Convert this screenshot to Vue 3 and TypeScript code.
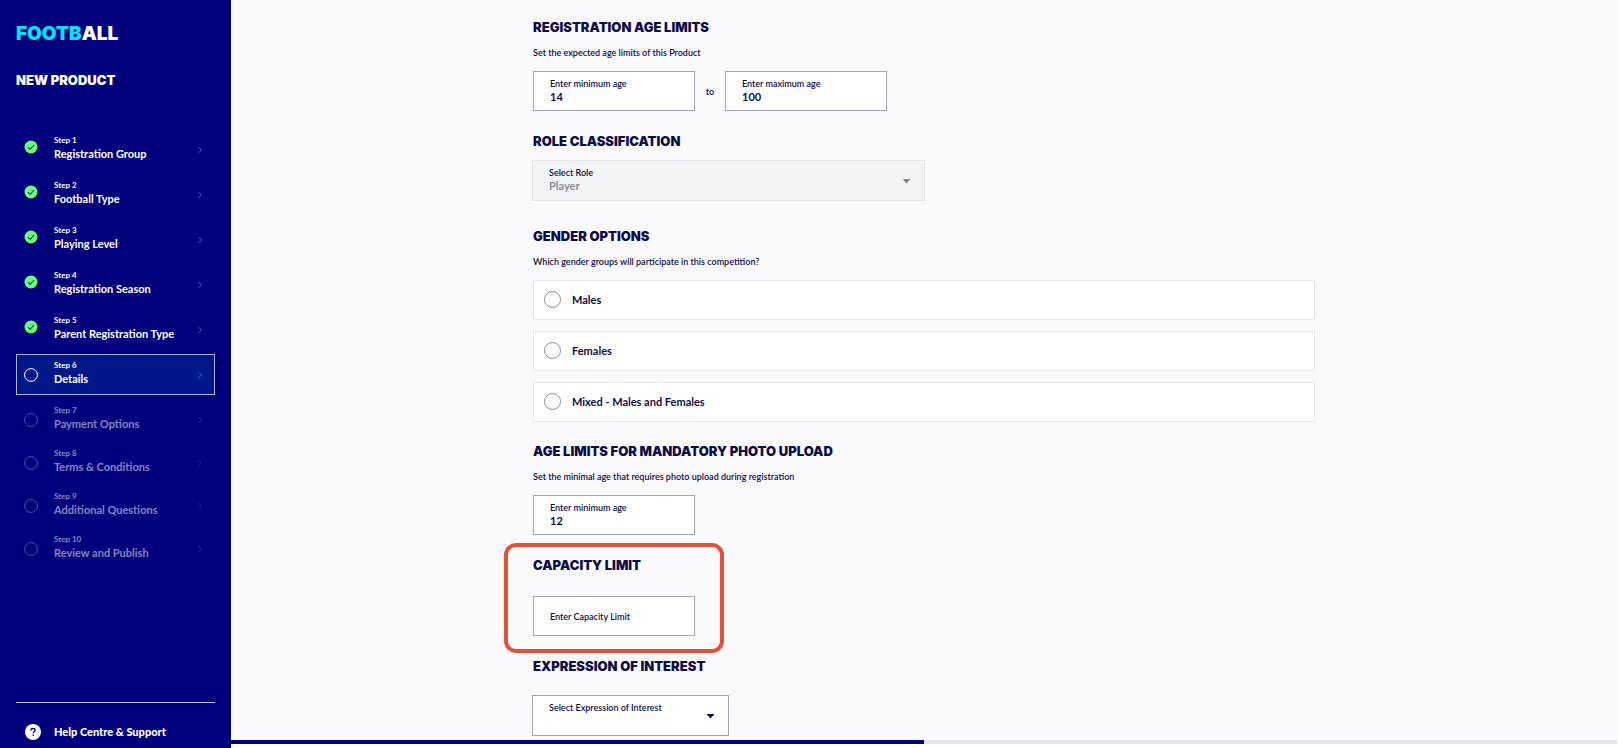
<script setup lang="ts">
import { ref } from 'vue'

type StepState = 'done' | 'current' | 'locked'

interface Step {
  id: number
  title: string
  state: StepState
}

const steps: Step[] = [
  { id: 1, title: 'Registration Group', state: 'done' },
  { id: 2, title: 'Football Type', state: 'done' },
  { id: 3, title: 'Playing Level', state: 'done' },
  { id: 4, title: 'Registration Season', state: 'done' },
  { id: 5, title: 'Parent Registration Type', state: 'done' },
  { id: 6, title: 'Details', state: 'current' },
  { id: 7, title: 'Payment Options', state: 'locked' },
  { id: 8, title: 'Terms & Conditions', state: 'locked' },
  { id: 9, title: 'Additional Questions', state: 'locked' },
  { id: 10, title: 'Review and Publish', state: 'locked' },
]

const genders: string[] = ['Males', 'Females', 'Mixed - Males and Females']

const minAge = ref('14')
const maxAge = ref('100')
const photoAge = ref('12')
const capacity = ref('')
const role = ref('Player')
const interest = ref('')
const gender = ref('')
const progress = ref(50)
</script>

<template>
  <div class="shell">
    <aside class="sidebar">
      <div class="logo"><span class="logo-accent">FOOTB</span>ALL</div>
      <h1 class="product">NEW PRODUCT</h1>

      <nav class="steps" aria-label="Steps">
        <button
          v-for="step in steps"
          :key="step.id"
          type="button"
          class="step"
          :class="step.state"
          :disabled="step.state === 'locked'"
        >
          <svg v-if="step.state === 'done'" class="mark" viewBox="0 0 14 14" aria-hidden="true">
            <circle cx="7" cy="7" r="6.5" fill="#6dff70" />
            <path d="M4 7.3 6.2 9.3 10.1 5" fill="none" stroke="#00337a" stroke-width="1.1" />
          </svg>
          <svg v-else class="mark" viewBox="0 0 14 14" aria-hidden="true">
            <circle cx="7" cy="7" r="6.4" fill="none" stroke="#ffffff" stroke-width="1" />
          </svg>
          <span class="step-text">
            <span class="step-label">Step {{ step.id }}</span>
            <span class="step-title">{{ step.title }}</span>
          </span>
          <svg class="chevron" viewBox="0 0 4 8" aria-hidden="true">
            <path d="M0.8 1.2 3.2 4 0.8 6.8" fill="none" stroke="#1277e0" stroke-width="1" />
          </svg>
        </button>
      </nav>

      <a class="help" href="#">
        <svg class="help-icon" viewBox="0 0 16 16" aria-hidden="true">
          <circle cx="8" cy="8" r="8" fill="#ffffff" />
          <path
            d="M5.9 6.4C5.9 5.1 6.8 4.5 8 4.5S10.2 5.2 10.2 6.3C10.2 7.6 8.3 7.6 8.3 9.2"
            fill="none"
            stroke="#00007d"
            stroke-width="1.3"
          />
          <circle cx="8.3" cy="11.1" r="0.85" fill="#00007d" />
        </svg>
        <span>Help Centre &amp; Support</span>
      </a>
    </aside>

    <main class="main">
      <div class="scroll">
        <form class="form" @submit.prevent>
          <section>
            <h2>REGISTRATION AGE LIMITS</h2>
            <p>Set the expected age limits of this Product</p>
            <div class="range">
              <label class="field">
                <span>Enter minimum age</span>
                <input v-model="minAge" type="text" />
              </label>
              <span class="to">to</span>
              <label class="field">
                <span>Enter maximum age</span>
                <input v-model="maxAge" type="text" />
              </label>
            </div>
          </section>

          <section class="role">
            <h2>ROLE CLASSIFICATION</h2>
            <label class="field picker disabled">
              <span>Select Role</span>
              <select v-model="role" disabled>
                <option>Player</option>
              </select>
              <svg class="arrow" viewBox="0 0 8 5" aria-hidden="true"><path d="M0 0H8L4 4.5Z" /></svg>
            </label>
          </section>

          <section class="gender">
            <h2>GENDER OPTIONS</h2>
            <p>Which gender groups will participate in this competition?</p>
            <div class="options">
              <label v-for="item in genders" :key="item" class="option">
                <input v-model="gender" type="radio" name="gender" :value="item" />
                <span>{{ item }}</span>
              </label>
            </div>
          </section>

          <section class="photo">
            <h2>AGE LIMITS FOR MANDATORY PHOTO UPLOAD</h2>
            <p>Set the minimal age that requires photo upload during registration</p>
            <label class="field">
              <span>Enter minimum age</span>
              <input v-model="photoAge" type="text" />
            </label>
          </section>

          <section class="capacity">
            <h2>CAPACITY LIMIT</h2>
            <input
              v-model="capacity"
              class="field"
              type="text"
              aria-label="Enter Capacity Limit"
              placeholder="Enter Capacity Limit"
            />
            <div class="highlight"></div>
          </section>

          <section class="interest">
            <h2>EXPRESSION OF INTEREST</h2>
            <label class="field picker">
              <span>Select Expression of Interest</span>
              <select v-model="interest">
                <option value=""></option>
                <option>Yes</option>
                <option>No</option>
              </select>
              <svg class="arrow" viewBox="0 0 8 5" aria-hidden="true"><path d="M0 0H8L4 4.5Z" /></svg>
            </label>
          </section>
        </form>
      </div>
      <div class="progress"><div class="bar" :style="{ width: progress + '%' }"></div></div>
    </main>
  </div>
</template>

<style>
body {
  margin: 0;
  background: #ffffff;
}
</style>

<style scoped>
.shell {
  display: flex;
  height: 100vh;
  overflow: hidden;
  font-family: Lato, 'Open Sans', sans-serif;
  font-size: 9px;
  font-weight: 600;
  color: #0f0d46;
}

.shell * {
  box-sizing: border-box;
}

.sidebar {
  display: flex;
  flex-direction: column;
  flex: 0 0 231px;
  padding: 20px 16px 8px;
  background: #00007d;
  color: #ffffff;
}

.logo {
  font-family: Inter, 'Open Sans', sans-serif;
  font-size: 19px;
  font-weight: 900;
  line-height: 28px;
}

.logo-accent {
  color: #00e5ff;
}

.product {
  margin: 22px 0 0;
  font-family: Inter, 'Open Sans', sans-serif;
  font-size: 13px;
  font-weight: 900;
  line-height: 20px;
}

.steps {
  display: flex;
  flex-direction: column;
  gap: 4px;
  margin-top: 39px;
}

.step {
  display: flex;
  align-items: center;
  height: 41px;
  padding: 0 12px 0 7px;
  border: 1px solid transparent;
  background: none;
  font: inherit;
  color: #ffffff;
  text-align: left;
}

.mark {
  flex: none;
  width: 14px;
  height: 14px;
}

.done .mark {
  margin-bottom: 5px;
}

.step-text {
  flex: 1;
  margin: 0 0 4px 16px;
}

.step-label,
.step-title {
  display: block;
  font-weight: 700;
}

.step-label {
  font-size: 8px;
  line-height: 13px;
}

.step-title {
  font-size: 11px;
  line-height: 14px;
}

.chevron {
  width: 4px;
  height: 8px;
}

.current {
  border-color: #a9b3dc;
  background: #001689;
}

.locked {
  height: 39px;
  opacity: 0.5;
}

.locked .mark {
  opacity: 0.6;
}

.current + .locked {
  margin-top: 1px;
}

.help {
  display: flex;
  align-items: center;
  margin-top: auto;
  padding: 21px 0 0 9px;
  border-top: 1px solid #c4c4dc;
  font-size: 11px;
  font-weight: 900;
  line-height: 16px;
  color: #ffffff;
  text-decoration: none;
}

.help-icon {
  width: 16px;
  height: 16px;
  margin-right: 13px;
}

.main {
  display: flex;
  flex: 1;
  flex-direction: column;
  min-width: 0;
  padding: 0 2px 4px 0;
}

.scroll {
  flex: 1;
  min-height: 0;
  overflow: hidden;
  background: #fafafc;
}

.form {
  width: 100%;
  max-width: 782px;
  margin: 0 auto;
  padding-top: 17px;
}

h2 {
  margin: 0;
  font-family: Inter, 'Open Sans', sans-serif;
  font-size: 13px;
  font-weight: 900;
  line-height: 20px;
}

p {
  margin: 8px 0 10px;
  line-height: 16px;
}

.range {
  display: flex;
  align-items: center;
}

.to {
  width: 30px;
  text-align: center;
}

.field {
  position: relative;
  display: flex;
  flex-direction: column;
  width: 162px;
  height: 40px;
  padding: 5px 16px 0;
  border: 1px solid #a3a5b3;
  border-radius: 0;
  background: #ffffff;
  line-height: 13px;
}

.field input,
.field select {
  width: 100%;
  height: 13px;
  padding: 0;
  border: 0;
  outline: 0;
  background: none;
  font: 700 11px / 13px Lato, 'Open Sans', sans-serif;
  color: inherit;
  appearance: none;
}

.picker {
  height: 41px;
  margin-left: -1px;
}

.arrow {
  position: absolute;
  top: 18px;
  right: 13px;
  width: 9px;
  height: 5px;
  fill: #0f0d46;
}

.role {
  margin-top: 20px;
}

.role .picker {
  width: 393px;
  margin-top: 9px;
}

.disabled {
  border-color: #e6e8eb;
  background: #f2f4f6;
}

.disabled select {
  color: #8b8f9c;
  opacity: 1;
}

.disabled .arrow {
  fill: #858997;
}

.gender {
  margin-top: 25px;
}

.options {
  display: flex;
  flex-direction: column;
  gap: 11px;
}

.option {
  display: flex;
  align-items: center;
  gap: 11px;
  height: 40px;
  padding: 0 10px 2px;
  border: 1px solid #e8e8ec;
  background: #ffffff;
  font-size: 11px;
  font-weight: 700;
}

.option input {
  width: 17px;
  height: 17px;
  margin: 0;
  border: 1px solid #8b8b9b;
  border-radius: 50%;
  background: #ffffff;
  appearance: none;
}

.option input:checked {
  border: 5px solid #00007d;
}

.photo {
  margin-top: 19px;
}

.capacity {
  position: relative;
  margin-top: 20px;
}

.capacity .field {
  margin-top: 21px;
  padding: 1px 16px 0;
  outline: 0;
  font: inherit;
  color: inherit;
}

.capacity .field::placeholder {
  color: inherit;
  opacity: 1;
}

.highlight {
  position: absolute;
  top: -12px;
  left: -29px;
  width: 220px;
  height: 110px;
  border: 4px solid #e5503c;
  border-radius: 12px;
  pointer-events: none;
}

.interest {
  margin-top: 20px;
}

.interest .picker {
  width: 197px;
  margin-top: 19px;
}

.progress {
  height: 4px;
  background: #e5e5e9;
}

.bar {
  height: 100%;
  background: #00007d;
}
</style>
